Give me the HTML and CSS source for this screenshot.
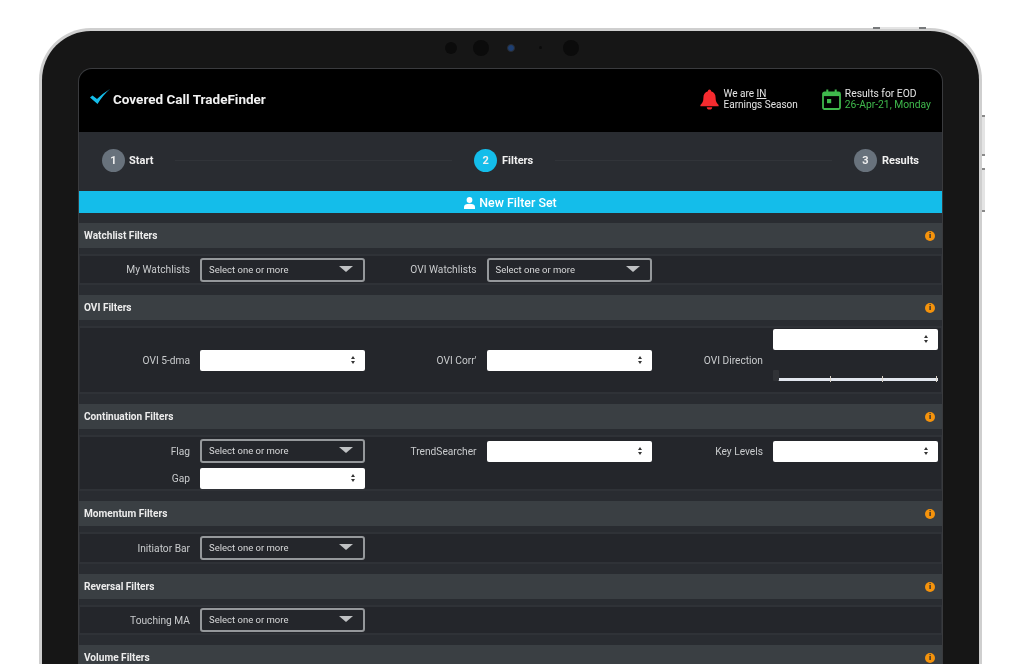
FILE: index.html
```html
<!DOCTYPE html>
<html>
<head>
  <meta charset="UTF-8">
  <title>Covered Call TradeFinder</title>
  <link rel="stylesheet" href="styles.css">
</head>
<body>
  <div class="device">
    <span class="hw-btn hw-top"></span>
    <span class="hw-btn hw-side-a"></span>
    <span class="hw-btn hw-side-b"></span>

    <div class="camera-row">
      <span class="cam-slot"><span class="cam cam-a"></span></span>
      <span class="cam-slot"><span class="cam cam-b"></span></span>
      <span class="cam-slot"><span class="cam cam-lens"></span></span>
      <span class="cam-slot"><span class="cam cam-dot"></span></span>
      <span class="cam-slot"><span class="cam cam-b"></span></span>
    </div>

    <div class="screen">
      <div class="top-bar">
        <div class="brand">
          <svg class="brand-check" width="22" height="16" viewBox="0 0 22 16">
            <path d="M1 8.5 L3.5 6.5 L8 10 Q13.5 4.5 21 0 Q14 6 8.5 15 Z" fill="#14bdea"/>
          </svg>
          <span class="brand-name">Covered Call TradeFinder</span>
        </div>
        <div class="notice notice-season">
          <svg width="19" height="21" viewBox="0 0 19 21">
            <path d="M9.5 0.5a1.6 1.6 0 0 1 1.6 1.7c3.2 .8 4.5 3.4 4.5 6.6 0 3.6 1 5.4 3 7.2v1.2H0.4V16c2-1.8 3-3.6 3-7.2 0-3.2 1.3-5.8 4.5-6.6a1.6 1.6 0 0 1 1.6-1.7z" fill="#f62b2f"/>
            <path d="M6.8 18.3h5.4a2.7 2.3 0 0 1-5.4 0z" fill="#f62b2f"/>
          </svg>
          <div class="notice-text">
            <div>We are <u>IN</u></div>
            <div>Earnings Season</div>
          </div>
        </div>
        <div class="notice notice-eod">
          <svg width="19" height="21" viewBox="0 0 19 21">
            <rect x="1" y="3.5" width="17" height="16.5" rx="1.5" fill="none" stroke="#3fb94c" stroke-width="1.8"/>
            <rect x="1" y="3.5" width="17" height="3.6" fill="#3fb94c"/>
            <rect x="4.3" y="0.5" width="2" height="4" fill="#3fb94c"/>
            <rect x="12.7" y="0.5" width="2" height="4" fill="#3fb94c"/>
            <rect x="5" y="10" width="4.2" height="4.2" fill="#3fb94c"/>
          </svg>
          <div class="notice-text">
            <div>Results for EOD</div>
            <div class="eod-date">26-Apr-21, Monday</div>
          </div>
        </div>
      </div>

      <div class="steps">
        <div class="step"><span class="step-num">1</span>Start</div>
        <span class="step-line"></span>
        <div class="step"><span class="step-num step-active">2</span>Filters</div>
        <span class="step-line"></span>
        <div class="step"><span class="step-num">3</span>Results</div>
      </div>

      <div class="new-set">
        <svg width="11" height="12" viewBox="0 0 11 12">
          <circle cx="5.5" cy="3" r="2.9" fill="#fff"/>
          <path d="M0 12V10C0 7.8 2.2 6.7 5.5 6.7S11 7.8 11 10V12Z" fill="#fff"/>
        </svg>
        New Filter Set
      </div>

      <section class="filter-group">
        <div class="group-head">Watchlist Filters <span class="info">i</span></div>
        <div class="group-body body-short">
          <div class="field">
            <label>My Watchlists</label>
            <div class="multi">Select one or more <span class="multi-arrow"></span></div>
          </div>
          <div class="field">
            <label>OVI Watchlists</label>
            <div class="multi">Select one or more <span class="multi-arrow"></span></div>
          </div>
        </div>
      </section>

      <section class="filter-group">
        <div class="group-head">OVI Filters <span class="info">i</span></div>
        <div class="group-body body-ovi">
          <div class="field">
            <label>OVI 5-dma</label>
            <div class="pick"><span class="pick-arrows"></span></div>
          </div>
          <div class="field">
            <label>OVI Corr'</label>
            <div class="pick"><span class="pick-arrows"></span></div>
          </div>
          <div class="field">
            <label>OVI Direction</label>
            <div class="direction">
              <div class="pick"><span class="pick-arrows"></span></div>
              <div class="slider">
                <span class="slider-handle"></span>
                <span class="tick tick-1"></span>
                <span class="tick tick-2"></span>
                <span class="tick tick-3"></span>
              </div>
            </div>
          </div>
        </div>
      </section>

      <section class="filter-group">
        <div class="group-head">Continuation Filters <span class="info">i</span></div>
        <div class="group-body body-cont">
          <div class="field">
            <label>Flag</label>
            <div class="multi">Select one or more <span class="multi-arrow"></span></div>
          </div>
          <div class="field">
            <label>TrendSearcher</label>
            <div class="pick"><span class="pick-arrows"></span></div>
          </div>
          <div class="field">
            <label>Key Levels</label>
            <div class="pick"><span class="pick-arrows"></span></div>
          </div>
          <div class="field">
            <label>Gap</label>
            <div class="pick"><span class="pick-arrows"></span></div>
          </div>
        </div>
      </section>

      <section class="filter-group">
        <div class="group-head">Momentum Filters <span class="info">i</span></div>
        <div class="group-body">
          <div class="field">
            <label>Initiator Bar</label>
            <div class="multi">Select one or more <span class="multi-arrow"></span></div>
          </div>
        </div>
      </section>

      <section class="filter-group">
        <div class="group-head">Reversal Filters <span class="info">i</span></div>
        <div class="group-body body-tight">
          <div class="field">
            <label>Touching MA</label>
            <div class="multi">Select one or more <span class="multi-arrow"></span></div>
          </div>
        </div>
      </section>

      <section class="filter-group">
        <div class="group-head">Volume Filters <span class="info">i</span></div>
      </section>
    </div>
  </div>
</body>
</html>
```

FILE: styles.css
```css
html, body {
  height: 664px;
  margin: 0;
  overflow: hidden;
  background-color: #fff;
}

body {
  font-family: Roboto, "Liberation Sans", sans-serif;
  padding: 28px 42px 0 39px;
  box-sizing: border-box;
}

.device {
  position: relative;
  height: 760px;
  box-sizing: border-box;
  background-color: #161616;
  border: 3px solid #cfcfcf;
  border-bottom: none;
  border-radius: 52px 52px 0 0;
  padding: 0 36px;
  filter: blur(0.35px);
}

.hw-btn {
  position: absolute;
  box-sizing: border-box;
  background-color: #e4e4e4;
}

.hw-top {
  top: -4px;
  right: 53px;
  width: 53px;
  height: 2px;
  border: solid #77797b;
  border-width: 0 7px;
}

.hw-side-a, .hw-side-b {
  right: -6px;
  width: 3px;
  border: solid #8a8a8a;
  border-width: 2px 0;
}

.hw-side-a {
  top: 84px;
  height: 41px;
}

.hw-side-b {
  top: 137px;
  height: 44px;
}

/* camera strip in the top bezel */
.camera-row {
  display: flex;
  justify-content: center;
  align-items: center;
  box-sizing: border-box;
  height: 37px;
  padding-bottom: 4px;
}

.cam-slot {
  display: flex;
  justify-content: center;
  width: 30px;
}

.cam {
  display: block;
  border-radius: 50%;
  background-color: #0b0b0b;
}

.cam-a {
  width: 12px;
  height: 12px;
}

.cam-b {
  width: 16px;
  height: 16px;
}

.cam-lens {
  width: 8px;
  height: 8px;
  background-color: #1d3f73;
  border: 1px solid #2a2c30;
  box-sizing: border-box;
}

.cam-dot {
  width: 3px;
  height: 3px;
}

.screen {
  height: 700px;
  background-color: #292c31;
  border: 1px solid #3a3b3e;
  border-bottom: none;
  border-radius: 14px 14px 0 0;
  overflow: hidden;
  color: #fff;
}

.top-bar {
  display: flex;
  align-items: center;
  box-sizing: border-box;
  height: 63px;
  background-color: #000;
  padding: 0 11px 4px 10px;
}

.brand {
  display: flex;
  align-items: center;
  flex: 1;
}

.brand-check {
  margin: -3px 2px 0 0;
}

.brand-name {
  font-size: 13.5px;
  font-weight: 700;
  color: #f2f2f2;
}

.notice {
  display: flex;
  align-items: center;
  font-size: 10.3px;
  line-height: 11px;
  color: #e4e4e4;
}

.notice svg {
  margin: 2px 5px 0 0;
}

.notice-eod svg {
  margin-right: 4px;
}

.notice-season {
  margin-right: 24px;
  font-size: 10px;
}

.eod-date {
  color: #3fb94c;
}

.steps {
  display: flex;
  align-items: center;
  box-sizing: border-box;
  height: 59px;
  padding: 0 23px 2px;
}

.step {
  display: flex;
  align-items: center;
  font-size: 11px;
  font-weight: 700;
  color: #f0f0f0;
}

.step-num {
  display: flex;
  align-items: center;
  justify-content: center;
  width: 23px;
  height: 23px;
  margin-right: 5px;
  border-radius: 50%;
  background-color: #68727c;
}

.step:first-child .step-num {
  margin-right: 4px;
}

.step-active {
  background-color: #14bdea;
}

.step-line {
  flex: 1;
  height: 1px;
  margin: 0 22px;
  background-color: #313439;
}

.new-set {
  display: flex;
  align-items: center;
  justify-content: center;
  box-sizing: border-box;
  height: 22px;
  padding-top: 1px;
  background-color: #14bdea;
  font-size: 12.4px;
  font-weight: 500;
}

.new-set svg {
  margin-right: 4px;
}

.filter-group {
  margin-top: 10px;
}

.group-head {
  display: flex;
  align-items: center;
  justify-content: space-between;
  height: 25px;
  padding: 0 7px 0 5px;
  background-color: #3a3f43;
  font-size: 10.1px;
  font-weight: 700;
  color: #ececec;
}

.info {
  display: flex;
  align-items: center;
  justify-content: center;
  width: 10px;
  height: 10px;
  border-radius: 50%;
  background-color: #f5930c;
  color: #2a2c30;
  font-size: 8px;
  font-weight: 900;
}

.group-body {
  display: grid;
  grid-template-columns: repeat(3, 286.5px);
  align-items: center;
  box-sizing: border-box;
  min-height: 32px;
  margin-top: 6px;
  background-color: #24262b;
  border: solid #2f3237;
  border-width: 2px 1px;
}

.body-short {
  min-height: 31px;
}

.body-tight {
  min-height: 30px;
}

.body-ovi {
  height: 68px;
}

.body-cont {
  row-gap: 5px;
  height: 56px;
  align-content: start;
  padding-top: 2px;
}

.field {
  display: flex;
  align-items: center;
}

.field label {
  flex: 0 0 110px;
  margin-right: 10px;
  font-size: 10.2px;
  text-align: right;
  color: #c9cbcd;
}

.multi {
  position: relative;
  box-sizing: border-box;
  width: 165px;
  height: 24px;
  line-height: 20px;
  padding-left: 7px;
  background-color: #24262b;
  border: 2px solid #95989b;
  border-radius: 3px;
  font-size: 9.5px;
  color: #d8d9da;
}

.multi-arrow {
  position: absolute;
  top: 6px;
  right: 10px;
  border-style: solid;
  border-width: 6px 7px 0;
  border-color: #bfc1c3 transparent transparent;
}

.pick {
  position: relative;
  box-sizing: border-box;
  width: 165px;
  height: 21px;
  background-color: #fff;
  border-radius: 2px;
}

.pick-arrows::before,
.pick-arrows::after {
  content: "";
  position: absolute;
  right: 10px;
  border-style: solid;
  border-color: transparent;
}

.pick-arrows::before {
  top: 6px;
  border-width: 0 2.5px 3px;
  border-bottom-color: #333;
}

.pick-arrows::after {
  top: 11px;
  border-width: 3px 2.5px 0;
  border-top-color: #333;
}

.direction {
  width: 165px;
  padding: 1px 0 11px;
}

.slider {
  position: relative;
  height: 3px;
  margin: 28px 0 0 5px;
  background-color: #e2e6ee;
}

.slider-handle {
  position: absolute;
  left: -5px;
  bottom: 0;
  width: 6px;
  height: 11px;
  background-color: #303236;
  border-radius: 1px;
}

.tick {
  position: absolute;
  top: -2px;
  width: 1px;
  height: 6px;
  background-color: #d9d2c8;
}

.tick-1 {
  left: 52px;
}

.tick-2 {
  left: 104px;
}

.tick-3 {
  left: 158px;
}
```
